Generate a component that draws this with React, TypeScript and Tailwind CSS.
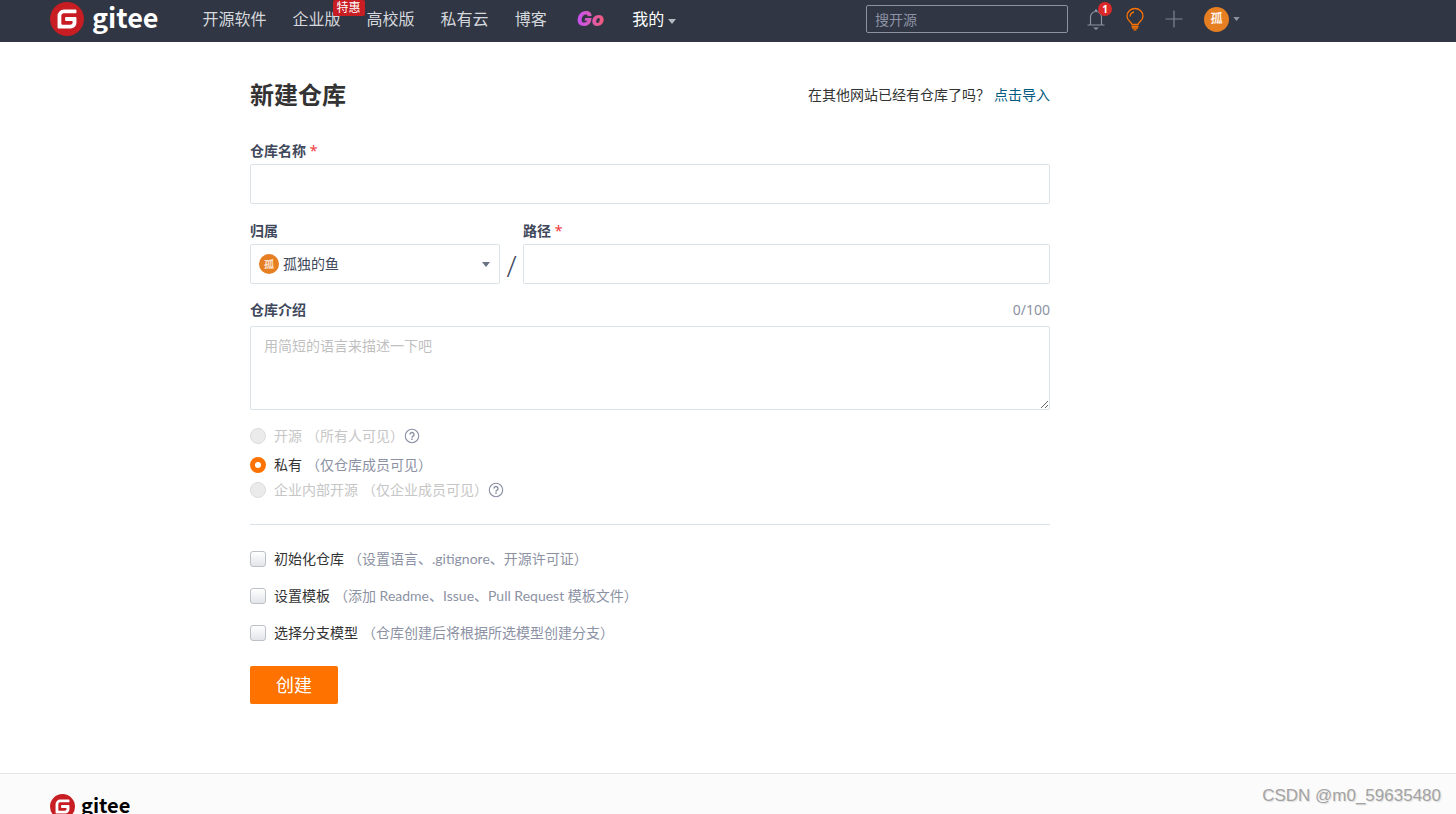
import { useState } from 'react';

const navLinks = ['开源软件', '企业版', '高校版', '私有云', '博客'];

const visibilities = [
  { id: 'public', label: '开源', note: '（所有人可见）', disabled: true, help: true, row: 'mt-4' },
  { id: 'private', label: '私有', note: '（仅仓库成员可见）', disabled: false, help: false, row: 'mt-[9px]' },
  { id: 'inner', label: '企业内部开源', note: '（仅企业成员可见）', disabled: true, help: true, row: 'mt-[5px]' },
];

const options = [
  { id: 'init', label: '初始化仓库', note: '（设置语言、.gitignore、开源许可证）' },
  { id: 'template', label: '设置模板', note: '（添加 Readme、Issue、Pull Request 模板文件）' },
  { id: 'branch', label: '选择分支模型', note: '（仓库创建后将根据所选模型创建分支）' },
];

function LogoMark({ className }: { className: string }) {
  return (
    <svg viewBox="0 0 24 24" className={className} aria-hidden="true">
      <circle cx="12" cy="12" r="11" fill="#fff" />
      <path
        fill="#c71d23"
        d="M11.984 0A12 12 0 0 0 0 12a12 12 0 0 0 12 12 12 12 0 0 0 12-12A12 12 0 0 0 12 0a12 12 0 0 0-.016 0zm6.09 5.333c.328 0 .593.266.592.593v1.482a.594.594 0 0 1-.593.592H9.777c-.982 0-1.778.796-1.778 1.778v5.63c0 .327.266.592.593.592h5.63c.982 0 1.778-.796 1.778-1.778v-.296a.593.593 0 0 0-.592-.593h-4.15a.592.592 0 0 1-.592-.592v-1.482a.593.593 0 0 1 .593-.592h6.815c.327 0 .593.265.593.592v3.408a4 4 0 0 1-4 4H5.926a.593.593 0 0 1-.593-.593V9.778a4.444 4.444 0 0 1 4.445-4.444h8.296Z"
      />
    </svg>
  );
}

function Caret({ className }: { className: string }) {
  return (
    <svg viewBox="0 0 8 5" className={className} fill="currentColor" aria-hidden="true">
      <path d="M0 0h8L4 5z" />
    </svg>
  );
}

function HelpIcon() {
  return (
    <svg viewBox="0 0 16 16" className="h-4 w-4 text-[#8c92a4]" fill="none" stroke="currentColor" aria-hidden="true">
      <circle cx="8" cy="8" r="6.7" strokeWidth="1.1" />
      <path d="M6 6.6a2 2 0 1 1 3 1.6c-.7.4-1 .7-1 1.5" strokeWidth="1.4" />
      <path d="M8 10.6v1.4" strokeWidth="1.5" />
    </svg>
  );
}

function Header() {
  return (
    <header className="h-[42px] shrink-0 bg-[#303643] pb-1 pl-[50px]">
      <div className="flex h-full max-w-[1190px] items-center">
        <a href="#" className="flex items-center gap-2">
          <LogoMark className="h-[34px] w-[34px]" />
          <span className="-mt-1 font-['Noto_Sans_CJK_SC',sans-serif] text-[27px] leading-8 font-bold text-white">gitee</span>
        </a>

        <nav className="ml-11 flex items-center gap-[26px] text-base leading-6 text-[#d5d8dd]">
          {navLinks.map((link) => (
            <a key={link} href="#" className="relative whitespace-nowrap">
              {link}
              {link === '企业版' && (
                <span className="absolute -top-[7px] left-10 h-4 rounded-xs bg-[#c71d23] px-1 text-xs leading-4 text-white">
                  特惠
                </span>
              )}
            </a>
          ))}
          <a
            href="#"
            className="ml-1 bg-gradient-to-r from-[#c94df5] to-[#f5576c] bg-clip-text pr-0.5 font-['Inter',sans-serif] text-xl leading-6 font-black text-transparent italic"
          >
            Go
          </a>
          <button type="button" className="flex items-center gap-1 whitespace-nowrap text-white">
            我的
            <Caret className="mt-1 h-[5px] w-2 text-[#b4b8bf]" />
          </button>
        </nav>

        <div className="ml-auto flex items-center">
          <input
            type="search"
            aria-label="搜开源"
            placeholder="搜开源"
            className="h-7 w-[202px] rounded-xs border border-[#8c92a4] px-2 text-sm text-white placeholder:text-[#8c92a4]"
          />
          <button type="button" aria-label="通知" className="relative ml-[18px]">
            <svg viewBox="0 0 20 22" className="h-[22px] w-5" fill="none" stroke="#8c92a4" strokeWidth="1.2">
              <path d="M4.5 17V9a5.5 5.5 0 0 1 11 0v8M1.500 17h17M9 3.200l1-1.400 1 1.400" />
              <path d="M7 19.500h6L10 22z" fill="#8c92a4" stroke="none" />
            </svg>
            <span className="absolute -top-1.5 left-3 h-3.5 w-3.5 rounded-full bg-[#db2828] text-center text-[10px] leading-3.5 font-bold text-white">
              1
            </span>
          </button>
          <button type="button" aria-label="提示" className="ml-[19px]">
            <svg viewBox="0 0 20 24" className="h-6 w-5" fill="none" stroke="#fe7300" strokeWidth="1.3">
              <path d="M7 17.500c0-2.200-5-3.500-5-8.300a8 7.700 0 0 1 16 0c0 4.800-5 6.100-5 8.300z" />
              <path d="M5 9.500a5 5 0 0 1 4-4.500M6.500 19.500h7M7 21.200h6M8.500 22.800h3" />
            </svg>
          </button>
          <button type="button" aria-label="新建" className="ml-5">
            <svg viewBox="0 0 18 18" className="h-[18px] w-[18px]" fill="none" stroke="#7d8496" strokeWidth="1.2">
              <path d="M9 .5v17M.5 9h17" />
            </svg>
          </button>
          <button type="button" aria-label="用户菜单" className="ml-[21px] flex items-center gap-1">
            <span className="h-[25px] w-[25px] rounded-full bg-[#e67e22] text-center text-xs leading-6 font-bold text-white/90">孤</span>
            <Caret className="h-1 w-[7px] text-[#8c92a4]" />
          </button>
        </div>
      </div>
    </header>
  );
}

export default function App() {
  const [visibility, setVisibility] = useState('private');
  const [intro, setIntro] = useState('');

  return (
    <div className="relative flex h-screen flex-col overflow-hidden bg-white font-['Noto_Sans','Noto_Sans_CJK_SC',sans-serif] text-sm text-[#333]">
      <Header />

      <main className="ml-[250px] max-w-[800px] shrink-0 pt-9 pb-[69px]">
        <div className="flex h-[34px] items-center justify-between">
          <h1 className="text-2xl font-bold">新建仓库</h1>
          <p>
            在其他网站已经有仓库了吗？
            <a href="#" className="ml-1 text-[#005980]">点击导入</a>
          </p>
        </div>

        <form onSubmit={(e) => e.preventDefault()}>
          <label htmlFor="name" className="mt-[29px] block leading-5 font-bold text-[#40485b]">
            仓库名称 <span className="font-normal text-[#f2383c]">*</span>
          </label>
          <input id="name" className="mt-[3px] block h-10 w-full rounded-xs border border-[#dce3e8] px-3.5" />

          <div className="mt-[17px] flex">
            <div className="w-[250px]">
              <label htmlFor="owner" className="block leading-5 font-bold text-[#40485b]">归属</label>
              <div className="relative mt-[3px]">
                <select
                  id="owner"
                  className="block h-10 w-full appearance-none rounded-xs border border-[#dce3e8] bg-white pl-8 text-[#40485b]"
                >
                  <option>孤独的鱼</option>
                </select>
                <span className="pointer-events-none absolute top-2.5 left-[9px] h-5 w-5 rounded-full bg-[#e67e22] text-center text-[10px] leading-5 font-bold text-white/80">
                  孤
                </span>
                <Caret className="pointer-events-none absolute top-[18px] right-2.5 h-[5px] w-2 text-[#6a7386]" />
              </div>
            </div>
            <span className="w-[23px] self-end text-center font-['Open_Sans',sans-serif] text-[30px] leading-9 font-light text-[#40485b]">
              /
            </span>
            <div className="flex-1">
              <label htmlFor="path" className="block leading-5 font-bold text-[#40485b]">
                路径 <span className="font-normal text-[#f2383c]">*</span>
              </label>
              <input id="path" className="mt-[3px] block h-10 w-full rounded-xs border border-[#dce3e8] px-3.5" />
            </div>
          </div>

          <div className="mt-4 flex items-center justify-between leading-5">
            <label htmlFor="intro" className="font-bold text-[#40485b]">仓库介绍</label>
            <span className="text-[#8c92a4]">{intro.length}/100</span>
          </div>
          <textarea
            id="intro"
            maxLength={100}
            value={intro}
            onChange={(e) => setIntro(e.target.value)}
            placeholder="用简短的语言来描述一下吧"
            className="mt-1.5 block h-[84px] w-full resize-y rounded-xs border border-[#dce3e8] px-[13px] py-[9px] leading-5 placeholder:text-[#bfbfbf]"
          />

          {visibilities.map((v) => (
            <div key={v.id} className={`flex h-5 items-center ${v.row}`}>
              <input
                type="radio"
                id={v.id}
                name="visibility"
                checked={visibility === v.id}
                disabled={v.disabled}
                onChange={() => setVisibility(v.id)}
                className="h-4 w-4 appearance-none rounded-full border border-[#dcdcdc] bg-white checked:border-[5px] checked:border-[#fe7300] disabled:bg-[#ebebeb]"
              />
              <label htmlFor={v.id} className={v.disabled ? 'ml-2 text-[#c6c6c6]' : 'ml-2'}>
                {v.label}
                <span className={v.disabled ? 'ml-1' : 'ml-1 text-[#8c92a4]'}>{v.note}</span>
              </label>
              {v.help && <HelpIcon />}
            </div>
          ))}

          <hr className="mt-6 border-[#dce3e8]" />

          <div className="mt-6 flex flex-col gap-[17px]">
            {options.map((o) => (
              <div key={o.id} className="flex h-5 items-center">
                <input
                  type="checkbox"
                  id={o.id}
                  className="h-4 w-4 appearance-none rounded-[3px] border border-[#bcc0c7] bg-gradient-to-b from-white to-[#e3e5ea] checked:from-[#fe7300] checked:to-[#fe7300]"
                />
                <label htmlFor={o.id} className="ml-2">
                  {o.label}
                  <span className="ml-1 font-['Lato','Noto_Sans_CJK_SC',sans-serif] text-[#8c92a4]">{o.note}</span>
                </label>
              </div>
            ))}
          </div>

          <button type="submit" className="mt-[23px] block h-[38px] rounded-xs bg-[#fe7300] px-[26px] text-lg leading-6 text-white">
            创建
          </button>
        </form>
      </main>

      <footer className="shrink-0 border-t border-[#e5e5e5] bg-[#fbfbfb] pt-5 pb-10 pl-[50px]">
        <a href="#" className="inline-flex items-center gap-1.5">
          <LogoMark className="h-[25px] w-[25px]" />
          <span className="-mt-1 font-['Noto_Sans_CJK_SC',sans-serif] text-xl leading-6 font-bold text-black">gitee</span>
        </a>
      </footer>

      <span className="absolute right-[15px] bottom-1.5 font-['Liberation_Sans',sans-serif] text-[17px] leading-6 text-[#a3a3a3] [text-shadow:1px_1px_1px_#ddd]">
        CSDN @m0_59635480
      </span>
    </div>
  );
}
